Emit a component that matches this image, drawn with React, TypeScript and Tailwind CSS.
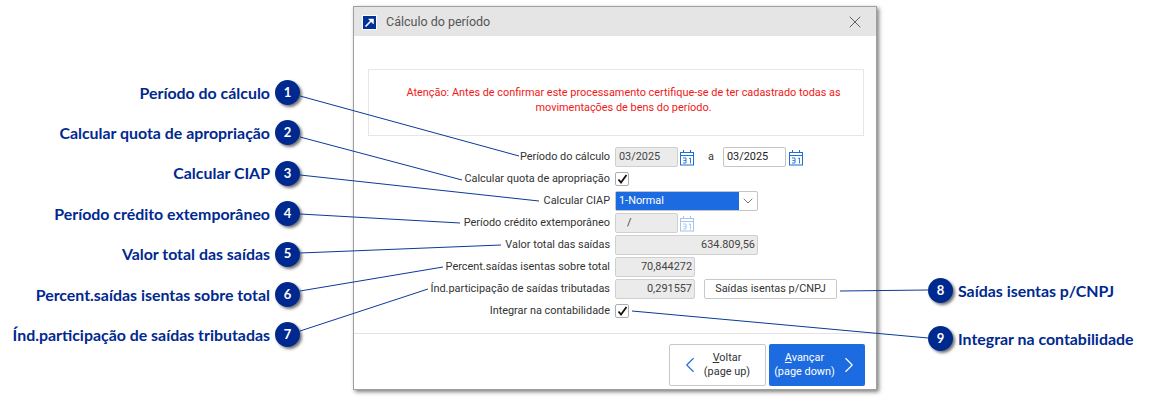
import { ChevronDown, ChevronLeft, ChevronRight, X } from "lucide-react";

const LEFT_CALLOUTS = [
  { n: 1, label: "Período do cálculo" },
  { n: 2, label: "Calcular quota de apropriação" },
  { n: 3, label: "Calcular CIAP" },
  { n: 4, label: "Período crédito extemporâneo" },
  { n: 5, label: "Valor total das saídas" },
  { n: 6, label: "Percent.saídas isentas sobre total" },
  { n: 7, label: "Índ.participação de saídas tributadas" },
];

// leader lines: [x1, y1, x2, y2]
const LINES = [
  [300, 96, 519, 156],
  [300, 137, 462, 180],
  [300, 175, 539, 201],
  [300, 214, 460, 223],
  [300, 253, 501, 245],
  [300, 291, 443, 267],
  [300, 331, 428, 289],
  [840, 291, 928, 290],
  [632, 311, 928, 338],
];

const Badge = ({ n }: { n: number }) => (
  <span className="flex h-[25px] w-[25px] shrink-0 items-center justify-center rounded-full bg-[#00298f] font-['Lato',sans-serif] text-[13px] font-bold text-white shadow-[2px_2px_3px_rgba(0,0,0,0.55)]">
    {n}
  </span>
);

const Calendar = ({ faded }: { faded?: boolean }) => (
  <svg
    width="15"
    height="17"
    viewBox="0 0 15 17"
    fill="none"
    stroke="#1e6fd9"
    strokeWidth="1"
    className={faded ? "opacity-40" : ""}
  >
    <rect x="0.5" y="3.5" width="13" height="12.5" />
    <path d="M0.5 6.5h13M3.5 1v3M10.5 1v3" />
    <path d="M3 9h3v2.5H3.5M6 11.5V14H3M9 9.5l1.5-0.5v5.5" strokeWidth="0.9" />
  </svg>
);

const Field = ({
  value,
  width,
  right,
  white,
}: {
  value: string;
  width: string;
  right?: boolean;
  white?: boolean;
}) => (
  <div
    className={`flex h-[20px] items-center rounded-[2px] border ${width} ${
      right ? "justify-end pr-[2px]" : "pl-[3px]"
    } ${white ? "border-[#c4c4c4] bg-white text-[#222]" : "border-[#cfcfcf] bg-[#ebebeb] text-[#444]"}`}
  >
    {value}
  </div>
);

const Check = () => (
  <div className="flex h-[14px] w-[14px] items-center justify-center rounded-[2px] border border-[#adadad] bg-white">
    <svg width="11" height="10" viewBox="0 0 11 10" fill="none" stroke="#111" strokeWidth="1.8">
      <path d="M1.5 5.5 4 8.5 9.5 1" />
    </svg>
  </div>
);

const Row = ({ label, children }: { label: string; children: React.ReactNode }) => (
  <div className="flex h-[22px] items-center">
    <div className="w-[261px] shrink-0 whitespace-nowrap pr-[5px] text-right text-[#333]">{label}</div>
    <div className="flex items-center">{children}</div>
  </div>
);

export default function App() {
  return (
    <div className="relative flex h-[405px] w-[1151px] overflow-hidden bg-white font-['Roboto',sans-serif] text-[10.9px]">
      {/* left callouts */}
      <div className="flex w-[353px] shrink-0 flex-col gap-[15.4px] pt-[80px] pr-[53px]">
        {LEFT_CALLOUTS.map((c) => (
          <div key={c.n} className="flex h-[25px] items-center justify-end gap-[5px]">
            <span className="whitespace-nowrap font-['Lato',sans-serif] text-[15.9px] font-bold text-[#00298f]">{c.label}</span>
            <Badge n={c.n} />
          </div>
        ))}
      </div>

      {/* dialog */}
      <div className="mt-[6px] flex h-[384px] w-[524px] shrink-0 flex-col border border-[#a0a0a0] bg-white shadow-[2px_2px_4px_rgba(0,0,0,0.5)]">
        <div className="flex h-[29px] shrink-0 items-center bg-[#e5e5e5] pt-[1px] pr-[11px] pl-[8px] text-[12.5px] text-[#555]">
          <div className="mr-[9px] flex h-[15px] w-[15px] items-center justify-center border border-white bg-[#003399]">
            <svg width="11" height="11" viewBox="0 0 11 11" fill="#fff" stroke="#fff">
              <path d="M1.5 9.5 8 3" strokeWidth="1.6" />
              <path d="M4.5 2h5v5z" strokeWidth="0.5" />
            </svg>
          </div>
          <span className="flex-1">Cálculo do período</span>
          <X size={20} strokeWidth={1} className="text-[#444]" />
        </div>

        <div className="mt-[33px] mr-[12px] ml-[14px] flex h-[67px] shrink-0 flex-col items-center border border-[#e6e6e6] pt-[15px] pl-[15px] text-center leading-[15px] text-[#f01818]">
          <div>Atenção: Antes de confirmar este processamento certifique-se de ter cadastrado todas as</div>
          <div>movimentações de bens do período.</div>
        </div>

        <div className="mt-[10px] flex flex-col">
          <Row label="Período do cálculo">
            <Field value="03/2025" width="w-[63px]" />
            <span className="ml-[2px] flex"><Calendar /></span>
            <span className="ml-[13px] mr-[9px] text-[#333]">a</span>
            <Field value="03/2025" width="w-[63px]" white />
            <span className="ml-[3px] flex"><Calendar /></span>
          </Row>
          <Row label="Calcular quota de apropriação">
            <Check />
          </Row>
          <Row label="Calcular CIAP">
            <div className="flex h-[20px] w-[143px] rounded-[2px] border border-[#c4c4c4] bg-white">
              <div className="flex flex-1 items-center bg-[#1c6be0] px-[3px] text-white">1-Normal</div>
              <div className="flex w-[18px] items-center justify-center">
                <ChevronDown size={16} strokeWidth={1} className="text-[#333]" />
              </div>
            </div>
          </Row>
          <Row label="Período crédito extemporâneo">
            <Field value="   /" width="w-[63px] whitespace-pre" />
            <span className="ml-[2px] flex"><Calendar faded /></span>
          </Row>
          <Row label="Valor total das saídas">
            <Field value="634.809,56" width="w-[143px]" right />
          </Row>
          <Row label="Percent.saídas isentas sobre total">
            <Field value="70,844272" width="w-[80px]" right />
          </Row>
          <Row label="Índ.participação de saídas tributadas">
            <Field value="0,291557" width="w-[80px]" right />
            <button className="ml-[9px] h-[20px] w-[133px] rounded-[2px] border border-[#c9c9c9] bg-white text-[#333]">
              Saídas isentas p/CNPJ
            </button>
          </Row>
          <Row label="Integrar na contabilidade">
            <Check />
          </Row>
        </div>

        <div className="mt-[11px] flex flex-1 items-start justify-end gap-[3px] border-t border-[#e3e3e3] pt-[10px] pr-[11px]">
          <button className="flex h-[42px] w-[97px] items-center rounded-[2px] border border-[#c9c9c9] bg-white pl-[7px] leading-[14px] text-[#333]">
            <ChevronLeft size={26} strokeWidth={1} className="shrink-0 text-[#1c6be0]" />
            <span className="flex-1 whitespace-nowrap pr-[14px] text-center">
              <span className="underline">V</span>oltar
              <br />
              (page up)
            </span>
          </button>
          <button className="flex h-[42px] w-[96px] items-center rounded-[2px] bg-[#1c6be0] pr-[3px] leading-[14px] text-white">
            <span className="flex-1 whitespace-nowrap pl-[4px] text-center">
              <span className="underline">A</span>vançar
              <br />
              (page down)
            </span>
            <ChevronRight size={26} strokeWidth={1} className="shrink-0" />
          </button>
        </div>
      </div>

      {/* right callouts */}
      <div className="ml-[51px] flex flex-col gap-[23px] pt-[278px]">
        <div className="flex h-[25px] items-center gap-[5px]">
          <Badge n={8} />
          <span className="whitespace-nowrap font-['Lato',sans-serif] text-[15.9px] font-bold text-[#00298f]">Saídas isentas p/CNPJ</span>
        </div>
        <div className="flex h-[25px] items-center gap-[5px]">
          <Badge n={9} />
          <span className="whitespace-nowrap font-['Lato',sans-serif] text-[15.9px] font-bold text-[#00298f]">Integrar na contabilidade</span>
        </div>
      </div>

      {/* leader lines */}
      <svg className="pointer-events-none absolute inset-0" width="1151" height="405" fill="none" stroke="#0a3a9a" strokeWidth="1">
        {LINES.map(([x1, y1, x2, y2], i) => (
          <line key={i} x1={x1} y1={y1} x2={x2} y2={y2} />
        ))}
      </svg>
    </div>
  );
}
